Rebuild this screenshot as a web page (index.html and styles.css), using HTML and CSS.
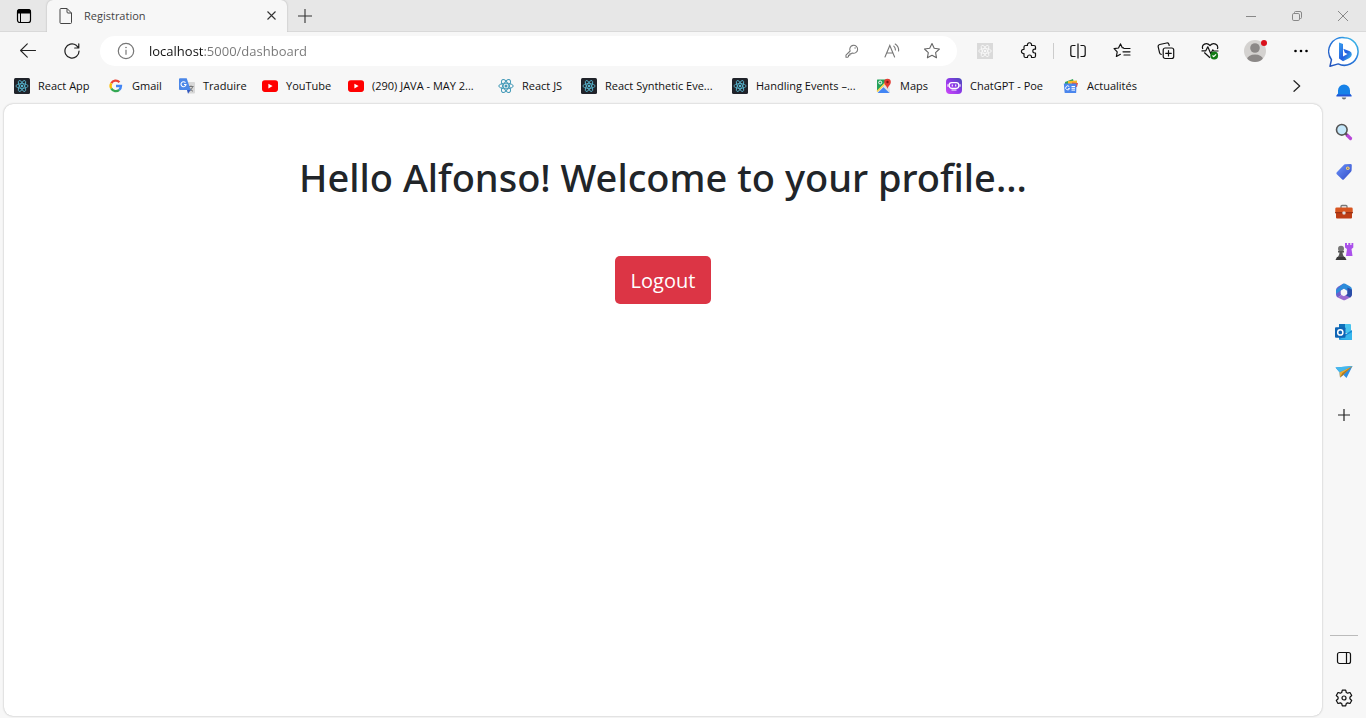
FILE: index.html
```html
<!DOCTYPE html>
<html lang="en">
<head>
<meta charset="utf-8">
<meta name="viewport" content="width=device-width, initial-scale=1">
<title>Registration</title>
<link rel="stylesheet" href="styles.css">
</head>
<body>
<svg class="defs" aria-hidden="true">
  <symbol id="atom" viewBox="0 0 16 16">
    <g fill="none" stroke="currentColor">
      <ellipse cx="8" cy="8" rx="7.2" ry="2.8"/>
      <ellipse cx="8" cy="8" rx="7.2" ry="2.8" transform="rotate(60 8 8)"/>
      <ellipse cx="8" cy="8" rx="7.2" ry="2.8" transform="rotate(120 8 8)"/>
    </g>
    <circle cx="8" cy="8" r="1.5" fill="currentColor"/>
  </symbol>
  <symbol id="react-dark" viewBox="0 0 16 16">
    <rect width="16" height="16" rx="1.5" fill="#20232a"/>
    <use href="#atom" x="1.2" y="1.2" width="13.6" height="13.6" color="#58b7d0"/>
  </symbol>
  <symbol id="youtube" viewBox="0 0 16 16">
    <rect y="2.3" width="16" height="11.6" rx="2.8" fill="#f00"/>
    <path d="M6.4 5.7v4.8l4.2-2.4z" fill="#fff"/>
  </symbol>
</svg>

<header class="titlebar">
  <button class="workspace" aria-label="Tab actions">
    <svg width="16" height="16" viewBox="0 0 16 16"><rect x="1.5" y="1.5" width="13" height="13" rx="2.3" fill="none" stroke="#000" stroke-width="1.2"/><path d="M1 5.5V4a3 3 0 0 1 3-3h8a3 3 0 0 1 3 3v1.500z" fill="#000"/><path d="M4.500 5v9.500" stroke="#000"/></svg>
  </button>
  <div class="tab">
    <svg width="14" height="16" viewBox="0 0 14 16" fill="none" stroke="#444"><path d="M2 .5h6L12.500 5v9.500q0 1-1 1H2q-1 0-1-1v-13q0-1 1-1zM8 .5V4q0 1 1 1h3.500"/></svg>
    <span class="tab-title">Registration</span>
    <button class="tab-close" aria-label="Close tab"><svg width="9" height="9" viewBox="0 0 9 9" stroke="#333" stroke-width="1.1"><path d="M.5.5l8 8M8.500.5l-8 8"/></svg></button>
  </div>
  <button class="new-tab" aria-label="New tab"><svg width="14" height="14" viewBox="0 0 14 14" stroke="#333" stroke-width="1.1"><path d="M7 0v14M0 7h14"/></svg></button>
  <div class="window-controls">
    <button aria-label="Minimize"><svg width="10" height="10" viewBox="0 0 10 10" stroke="#888"><path d="M0 5.500h10"/></svg></button>
    <button aria-label="Restore"><svg width="10" height="10" viewBox="0 0 10 10" fill="none" stroke="#888"><rect x=".5" y="2.500" width="7" height="7" rx="1.300"/><path d="M2.500 2V1.500a1 1 0 0 1 1-1H8A1.500 1.500 0 0 1 9.500 2v4.500a1 1 0 0 1-1 1H8"/></svg></button>
    <button aria-label="Close"><svg width="10" height="10" viewBox="0 0 10 10" stroke="#888"><path d="M0 0l10 10M10 0L0 10"/></svg></button>
  </div>
</header>

<div class="browser">
  <div class="content">
    <nav class="toolbar" aria-label="Toolbar">
      <button class="tool" aria-label="Back"><svg width="16" height="16" viewBox="0 0 16 16" fill="none" stroke="#222" stroke-width="1.100" stroke-linecap="round" stroke-linejoin="round"><path d="M15.500 7.500H.8M7.300.8L.6 7.500l6.700 6.700"/></svg></button>
      <button class="tool" aria-label="Refresh"><svg width="16" height="16" viewBox="0 0 17 17" fill="none" stroke="#222" stroke-width="1.300" stroke-linecap="round" stroke-linejoin="round"><path d="M16 8.500a7.500 7.500 0 1 1-3-6l2.500 2.500M15.700 1v4.300h-4.300"/></svg></button>
      <div class="address">
        <svg width="18" height="18" viewBox="0 0 18 18" fill="none" stroke="#777" stroke-width="1.200"><circle cx="9" cy="9" r="7.700"/><path d="M9 7.800v5"/><circle cx="9" cy="5.500" r=".5" fill="#777" stroke-width=".6"/></svg>
        <input class="url" type="text" aria-label="Address" value="localhost:5000/dashboard">
        <button class="address-action" aria-label="Saved password"><svg width="14" height="14" viewBox="0 0 16 16" fill="none" stroke="#777" stroke-width="1.200" stroke-linejoin="round"><path d="M5.900 8A4.500 4.500 0 1 1 8.300 10.200L7 11.300H5.500v1.600H4v1.500l-.8.700H1.100v-2.400z"/><circle cx="11.500" cy="4.500" r=".8" fill="#777" stroke="none"/></svg></button>
        <button class="address-action" aria-label="Read aloud"><svg width="17" height="16" viewBox="0 0 17 16" fill="none" stroke="#777" stroke-width="1.100" stroke-linecap="round"><path d="M1 14L5.800 2.500 10.600 14M2.700 10h6.200M9.800 3.200q1.700 1.500 1.600 3.800M11.200 1q3.800 2.500 3.400 7"/></svg></button>
        <button class="address-action" aria-label="Add to favorites"><svg width="18" height="18" viewBox="0 0 18 18" fill="none" stroke="#666" stroke-width="1.100" stroke-linejoin="round"><path d="M9 1.500l2.200 4.800 5.200.7-3.800 3.600.9 5.200L9 13.300l-4.600 2.500.9-5.200L1.500 7l5.200-.7z"/></svg></button>
      </div>
      <button class="tool" aria-label="React Developer Tools"><svg width="16" height="16" viewBox="0 0 16 16"><rect width="16" height="16" fill="#dadada"/><use href="#atom" x="1" y="1" width="14" height="14" color="#f8f8f8"/></svg></button>
      <button class="tool" aria-label="Extensions"><svg width="18" height="18" viewBox="0 0 18 18" fill="none" stroke="#111" stroke-width="1.200" stroke-linejoin="round"><path d="M5.500 3.500h2a2.100 2.100 0 1 1 4 0H14q1.500 0 1.500 1.500v2.200h-.8a1.900 1.900 0 0 0 0 3.800h.8V14q0 1.500-1.500 1.500h-2.500V15a2 2 0 0 0-4 0v.5h-2Q4 15.500 4 14v-2.500a2.100 2.100 0 1 1 0-4.100V5q0-1.500 1.500-1.500z"/></svg></button>
      <span class="tool-divider"></span>
      <button class="tool" aria-label="Split screen"><svg width="16" height="16" viewBox="0 0 16 16" fill="none" stroke="#111" stroke-width="1.200"><path d="M5.500 2.500H2.800q-2 0-2 2v7q0 2 2 2h2.700M8 .5v15M10.500 2.500h2.700q2 0 2 2v7q0 2-2 2h-2.700"/></svg></button>
      <button class="tool" aria-label="Favorites"><svg width="18" height="18" viewBox="0 0 18 18" fill="none" stroke="#111" stroke-width="1.200" stroke-linejoin="round" stroke-linecap="round"><path d="M10.500 5.900L9.300 5.700 7.500 1.900 5.500 6l-4.400.6 3.100 3.200-.8 4.700 4-2.200M11 6.500h6M10 9.800h7M11 13h6"/></svg></button>
      <button class="tool" aria-label="Collections"><svg width="18" height="18" viewBox="0 0 18 18" fill="none" stroke="#111" stroke-width="1.200" stroke-linecap="round"><rect x="6.200" y="6" width="10.500" height="10.500" rx="2"/><path d="M11.500 8.500v5.500M8.700 11.300h5.600M4.200 12.300a2 2 0 0 1-1.600-1.500L1.200 4.900A2 2 0 0 1 2.700 2.500l7-1.500A2 2 0 0 1 12 2.600l.2.900"/></svg></button>
      <button class="tool" aria-label="Browser essentials"><svg width="18" height="18" viewBox="0 0 18 18" fill="none" stroke="#111" stroke-width="1.200" stroke-linejoin="round"><path d="M1.800 7C0 2.500 5.500-.3 9 3.500 12.500-.3 18 2.500 16.400 7M3.300 10.500L9 15.800M.5 8.800h4.300l2-4 3 7 2-4 .8 1.200h4.900"/><circle cx="13.200" cy="13.500" r="3.900" fill="#137a16" stroke="none"/><path d="M11.500 13.500l1.200 1.200 2.400-2.400" stroke="#fff"/></svg></button>
      <button class="tool tool-wide" aria-label="Profile"><svg width="26" height="26" viewBox="0 0 26 26"><defs><clipPath id="face"><circle cx="13" cy="13" r="11"/></clipPath></defs><circle cx="13" cy="13" r="11" fill="#d4d2d0"/><g clip-path="url(#face)" fill="#8b8887"><circle cx="13" cy="10" r="4.800"/><ellipse cx="13" cy="21.500" rx="8" ry="5"/></g><circle cx="22" cy="5" r="3" fill="#d9101b"/></svg></button>
      <button class="tool tool-wide" aria-label="Settings and more"><svg width="16" height="4" viewBox="0 0 16 4"><circle cx="2.500" cy="2" r="1.300"/><circle cx="8" cy="2" r="1.300"/><circle cx="13.500" cy="2" r="1.300"/></svg></button>
    </nav>

    <nav class="bookmarks" aria-label="Favorites bar">
      <a class="bookmark" href="#"><svg><use href="#react-dark"/></svg>React App</a>
      <a class="bookmark" href="#"><svg viewBox="0 0 16 16" fill="none" stroke-width="2.300"><path d="M3.300 5.300A5 5 0 0 1 11.400 4.300" stroke="#ea4335"/><path d="M3.300 5.300a5 5 0 0 0 0 5.200" stroke="#fbbc05"/><path d="M3.300 10.500a5 5 0 0 0 7.900 1.300" stroke="#34a853"/><path d="M8 8h5a5 5 0 0 1-1.800 3.800" stroke="#4285f4"/></svg>Gmail</a>
      <a class="bookmark" href="#"><svg viewBox="0 0 16 16"><path d="M6 4h9q1 0 1 1v9.500q0 1-1 1H9z" fill="#d8d8d8"/><path d="M9.500 8.500h5M12 7.500v1M13.800 8.500q-1 3-3.300 4.500M10.500 9.800q1.300 2.500 3.500 3.500" fill="none" stroke="#777"/><path d="M1 .2h6.700L11.600 12H1q-1 0-1-1V1.200q0-1 1-1z" fill="#4b87e8"/><path d="M8 12h3.600L9 15.700z" fill="#3057c2"/><path d="M6.500 4.700A2.500 2.500 0 1 0 7 6.500H5" fill="none" stroke="#fff" stroke-width="1.100"/></svg>Traduire</a>
      <a class="bookmark" href="#"><svg><use href="#youtube"/></svg>YouTube</a>
      <a class="bookmark" href="#"><svg><use href="#youtube"/></svg>(290) JAVA - MAY 2...</a>
      <a class="bookmark react-light" href="#"><svg><use href="#atom"/></svg>React JS</a>
      <a class="bookmark" href="#"><svg><use href="#react-dark"/></svg>React Synthetic Eve...</a>
      <a class="bookmark" href="#"><svg><use href="#react-dark"/></svg>Handling Events –...</a>
      <a class="bookmark" href="#"><svg viewBox="0 0 16 16"><path d="M1.500 1.500h10L1 13.500V2q0-.5.500-.5z" fill="#24a15a"/><path d="M1 14L13 3l1 12z" fill="#dde1e5"/><path d="M1.500 15L7.500 9.300l6 5.700z" fill="#4285f4"/><path d="M1 13.500l11-11" stroke="#fbd14b" stroke-width="1.600"/><circle cx="4.200" cy="4.500" r="1.500" fill="none" stroke="#fff"/><path d="M11.500 11C11 8 8.200 7 8.200 4a3.300 3.300 0 0 1 6.600 0c0 3-2.800 4-3.300 7z" fill="#e23b32"/><circle cx="11.500" cy="4" r="1.200" fill="#7c1712"/></svg>Maps</a>
      <a class="bookmark" href="#"><svg viewBox="0 0 16 16"><defs><linearGradient id="poe" x1="0" y1="1" x2="1" y2="0"><stop stop-color="#d04af8"/><stop offset=".5" stop-color="#8f39e9"/><stop offset="1" stop-color="#454bb5"/></linearGradient></defs><rect width="16" height="16" rx="4" fill="url(#poe)"/><rect x="3.200" y="4.700" width="9.600" height="5.600" rx="2.500" fill="none" stroke="#fff" stroke-width="1.300"/><path d="M6.300 6.500v2M9.700 6.500v2M5.500 12h5M2 6.300v2.400M14 6.300v2.400" stroke="#fff" stroke-width="1.100"/></svg>ChatGPT - Poe</a>
      <a class="bookmark" href="#"><svg viewBox="0 0 16 16"><path d="M2 4l8-3 1 4-9 3z" fill="#31a35a"/><path d="M5 3l9-.5V8H5z" fill="#f4b92b"/><path d="M9 4.500l6 .5-1 4H9z" fill="#e94c3c"/><path d="M.8 5.500h12.700l-.3 9q0 .5-.7.500H2.300q-.6 0-.7-.5z" fill="#4b86ed"/><path d="M6.300 8.700a2 2 0 1 0 .3 1.800H5.200M8.500 8.500H12M8.500 10.300H12M8.500 12.100H12" fill="none" stroke="#fff"/></svg>Actualités</a>
      <button class="more" aria-label="More favorites"><svg width="8" height="12" viewBox="0 0 8 12" fill="none" stroke="#222" stroke-width="1.200" stroke-linecap="round" stroke-linejoin="round"><path d="M1 .7L6.700 6 1 11.300"/></svg></button>
    </nav>

    <main class="page">
      <h1>Hello Alfonso! Welcome to your profile...</h1>
      <button class="logout">Logout</button>
    </main>
  </div>

  <aside class="sidebar" aria-label="Sidebar">
    <button aria-label="Bing chat"><svg width="32" height="32" viewBox="0 0 32 32"><defs><linearGradient id="ring" x1="0" y1="1" x2="1" y2="0"><stop stop-color="#2451ba"/><stop offset=".6" stop-color="#287fe0"/><stop offset="1" stop-color="#42c8e8"/></linearGradient><linearGradient id="bee" x1="0" y1="0" x2="1" y2="1"><stop stop-color="#39a3ef"/><stop offset=".55" stop-color="#245ce0"/><stop offset="1" stop-color="#42c7e7"/></linearGradient></defs><path d="M16.500 1.700a13.800 13.800 0 1 1-6.300 26.200L2 30.200l1.500-6.500A13.800 13.800 0 0 1 16.500 1.700z" fill="#fff" stroke="url(#ring)" stroke-width="1.500" stroke-linejoin="round"/><path d="M11 6.500l4 1.500v12.500l4.500-2.500-2.700-1.300-1.500-4 6.500 2.600q2 .8 2 3.300 0 2-2.300 3.400L15 25.200 11 22.500z" fill="url(#bee)"/></svg></button>
    <button aria-label="Notifications"><svg width="18" height="18" viewBox="0 0 18 18"><path d="M3 7.500a6 6 0 0 1 12 0v3l1.700 2.500H1.300L3 10.500z" fill="#1682e8"/><path d="M1.300 13.500h15.400l-.8-2H2.100z" fill="#2454d5"/><path d="M6.700 14.500h4.600q-.5 2-2.300 2t-2.300-2z" fill="#687078"/></svg></button>
    <button aria-label="Search"><svg width="18" height="18" viewBox="0 0 18 18"><path d="M12 12l3.500 3.500" stroke="#b846d8" stroke-width="3.200" stroke-linecap="round"/><path d="M10 10l2 2" stroke="#555" stroke-width="2"/><circle cx="6.800" cy="6.800" r="5.300" fill="#c4e7fa" stroke="#555" stroke-width="1.600"/></svg></button>
    <button aria-label="Shopping"><svg width="18" height="18" viewBox="0 0 18 18"><defs><linearGradient id="tag" x1="0" y1="0" x2="1" y2="1"><stop stop-color="#6d94fa"/><stop offset="1" stop-color="#324cc8"/></linearGradient></defs><path d="M10 1.300l5.500-.3q1.300 0 1.300 1.300l-.2 5q0 .8-.6 1.400l-7 7.500q-1 1-2 0l-5.200-5q-1-1 0-2l7-7.300q.5-.5 1.200-.6z" fill="url(#tag)"/><circle cx="12.800" cy="5.200" r="1.800" fill="#f7d46b"/><circle cx="12.800" cy="5.200" r=".7" fill="#657"/></svg></button>
    <button aria-label="Tools"><svg width="18" height="18" viewBox="0 0 18 18"><path d="M6 5V3.500q0-1 1-1h4q1 0 1 1V5" fill="none" stroke="#777" stroke-width="1.300"/><rect x=".3" y="4.500" width="17.400" height="6" rx="1.300" fill="#d75520"/><path d="M1 10h16v4.500q0 1-1 1H2q-1 0-1-1z" fill="#bd3d15"/><path d="M0 9.700h18" stroke="#8d2b13"/><rect x="7.500" y="8.500" width="3" height="3" rx=".7" fill="#ddd"/></svg></button>
    <button aria-label="Games"><svg width="20" height="20" viewBox="0 0 20 20"><path d="M11 1h2v2h1.300V1h2v2h1.200V1h1.800v4.500L17.500 7l1 7H12l1-7-2-1.500z" fill="#ab51eb"/><circle cx="7" cy="6.800" r="3" fill="#777"/><path d="M4 9h6v1.500H8.500q0 3 2.500 5H3q2.500-2 2.500-5H4z" fill="#555"/><path d="M3 15h8l1.500 3h-11z" fill="#393939"/></svg></button>
    <button aria-label="Microsoft 365"><svg width="18" height="18" viewBox="0 0 18 18"><path d="M8.500.5L3 3.700Q1 5 1 7.200v4.300q0 2 1.700 3l3.800-2.500q-.8-.5-.8-1.700V7.500L9 5.500z" fill="#6c5fcd"/><path d="M8 .7q1.200-.6 2.300 0L15.200 3.500Q17 4.600 17 6.700v4l-4.500-.2V8L8.700 5.600 5.700 7.500 1 11V7z" fill="#2d8cdb"/><path d="M17 7v4.300q0 2-1.800 3.100L10.300 17q-1.200.7-2.300 0l-5.300-2.500 3.700-2.600 2.600 1.300 3.500-2.200V7z" fill="#9b69d0"/><path d="M12.500 4.500L17 6.700v4.600q0 2-1.800 3.100l-4.200-2 1.500-1.700z" fill="#294da7"/></svg></button>
    <button aria-label="Outlook"><svg width="18" height="18" viewBox="0 0 18 18"><rect x="4" y="1" width="12" height="9" rx="1" fill="#49c4ee"/><path d="M4 1h6v5H4z" fill="#0f71ba"/><path d="M4 8l7 3 6-4v9q0 1-1 1H5q-1 0-1-1z" fill="#188bd5"/><path d="M4 16.500L17 9v7q0 1-1 1z" fill="#36b6ed"/><rect y="4.200" width="10.500" height="10.500" rx="1" fill="#0f65b5"/><circle cx="5.300" cy="9.400" r="2.600" fill="none" stroke="#fff" stroke-width="1.500"/></svg></button>
    <button aria-label="Drop"><svg width="18" height="18" viewBox="0 0 18 18"><path d="M.5 4.500L17.500 3l-6 12-3-3-3.500 2.500-.5-5.300z" fill="#2f8fe2"/><path d="M17.500 3l-13 6.200.5 5.300 3.500-3z" fill="#e9ac36"/><path d="M17.500 3l-10 7-2.500 4.500 3.500-3z" fill="#a97724"/><path d="M.5 4.500L17.500 3l-13 6.200z" fill="#45b9ed"/></svg></button>
    <button class="customize" aria-label="Customize"><svg width="12" height="12" viewBox="0 0 12 12" stroke="#222" stroke-width="1.200"><path d="M6 0v12M0 6h12"/></svg></button>
    <div class="sidebar-bottom">
      <button aria-label="Hide sidebar"><svg width="16" height="16" viewBox="0 0 16 16" fill="none" stroke="#111" stroke-width="1.200"><rect x="1.500" y="2.500" width="13" height="11" rx="2"/><path d="M10.500 2.500v11"/></svg></button>
      <button aria-label="Settings"><svg width="18" height="18" viewBox="0 0 18 18" fill="none" stroke="#111" stroke-width="1.200" stroke-linejoin="round"><path d="M7.300 1.200h3.400l.6 2.300 1.300.7 2.400-.7 1.700 3-1.800 1.700v1.600l1.800 1.700-1.700 3-2.400-.7-1.300.7-.6 2.300H7.300l-.6-2.300-1.300-.7-2.400.7-1.700-3 1.800-1.700V8.200L1.300 6.500l1.700-3 2.400.7 1.300-.7z"/><circle cx="9" cy="9" r="2"/></svg></button>
    </div>
  </aside>
</div>
</body>
</html>
```
FILE: styles.css
```css
* { box-sizing: border-box; }

body {
  display: flex;
  flex-direction: column;
  min-height: 100vh;
  margin: 0;
  background: #f7f7f7;
  color: #111;
  font-family: "Open Sans", "Noto Sans", sans-serif;
  font-size: 11px;
}

.defs { display: none; }

button {
  display: flex;
  align-items: center;
  justify-content: center;
  margin: 0;
  padding: 0;
  border: 0;
  background: none;
  font: inherit;
}

svg { flex: none; }

/* Title bar */
.titlebar {
  display: flex;
  height: 32px;
  background: #e7e7e7;
  border-bottom: 1px solid #d9d9d9;
}

.workspace { width: 47px; }

.tab {
  display: flex;
  align-items: center;
  gap: 11px;
  width: 240px;
  height: 32px;
  padding: 0 11px 1px 12px;
  border-radius: 6px 6px 0 0;
  background: #f7f7f7;
  box-shadow: 0 0 2px #aaa;
  clip-path: inset(0 -2px 0 -2px);
}

.tab-title {
  flex: 1;
  color: #444;
}

.new-tab { width: 35px; }

.window-controls {
  display: flex;
  margin-left: auto;
}

.window-controls button { width: 46px; }

/* Browser frame */
.browser {
  display: flex;
  flex: 1;
}

.content {
  display: flex;
  flex: 1;
  flex-direction: column;
  min-width: 0;
}

.toolbar {
  display: flex;
  align-items: center;
  height: 38px;
  margin-right: -1px;
  padding-left: 6px;
}

.tool {
  flex: none;
  width: 44px;
  height: 36px;
}

.tool-wide { width: 46px; }

.tool-divider {
  width: 1px;
  height: 16px;
  margin: 0 2px;
  background: #ccc;
}

.address {
  display: flex;
  flex: 1;
  align-items: center;
  min-width: 0;
  height: 30px;
  margin: 0 6px;
  padding: 0 5px 0 17px;
  border-radius: 15px;
  background: #fff;
}

.url {
  flex: 1;
  min-width: 0;
  margin-left: 14px;
  padding: 0;
  border: 0;
  outline: 0;
  background: linear-gradient(to right, #111 55px, #767676 55px);
  background-clip: text;
  color: transparent;
  font: inherit;
  font-size: 13px;
}

.address-action {
  flex: none;
  width: 40px;
  height: 30px;
}

/* Favorites bar */
.bookmarks {
  display: grid;
  grid-template-columns: 94px 71px 83px 86px 150px 83px 151px 144px 70px 117px 1fr auto;
  align-items: center;
  height: 33px;
  padding: 0 20px 2px 14px;
}

.bookmark {
  display: flex;
  align-items: center;
  gap: 8px;
  color: inherit;
  text-decoration: none;
  white-space: nowrap;
}

.bookmark svg {
  width: 16px;
  height: 16px;
}

.react-light svg { color: #4299b7; }

.more {
  width: 12px;
  height: 24px;
}

/* Web page */
.page {
  display: flex;
  flex: 1;
  flex-direction: column;
  align-items: center;
  margin: 1px 1px 2px 4px;
  padding: 49px 24px;
  border-radius: 9px;
  background: #fff;
  box-shadow: 0 0 2px #aaa;
}

h1 {
  margin: 0 0 55px;
  color: #212529;
  font-family: "Noto Sans", "Open Sans", sans-serif;
  font-size: 38px;
  font-weight: 500;
  line-height: 48px;
  text-align: center;
}

.logout {
  height: 48px;
  padding: 0 16px;
  border-radius: 5px;
  background: #dc3545;
  color: #fff;
  font-size: 20px;
}

/* Sidebar */
.sidebar {
  display: flex;
  flex-direction: column;
  width: 43px;
}

.sidebar button {
  width: 42px;
  height: 40px;
}

.sidebar .customize { margin-top: 3px; }

.sidebar-bottom {
  margin-top: auto;
}

.sidebar-bottom::before {
  content: "";
  display: block;
  height: 1px;
  margin: 0 8px 2px 7px;
  background: #bbb;
}
```
